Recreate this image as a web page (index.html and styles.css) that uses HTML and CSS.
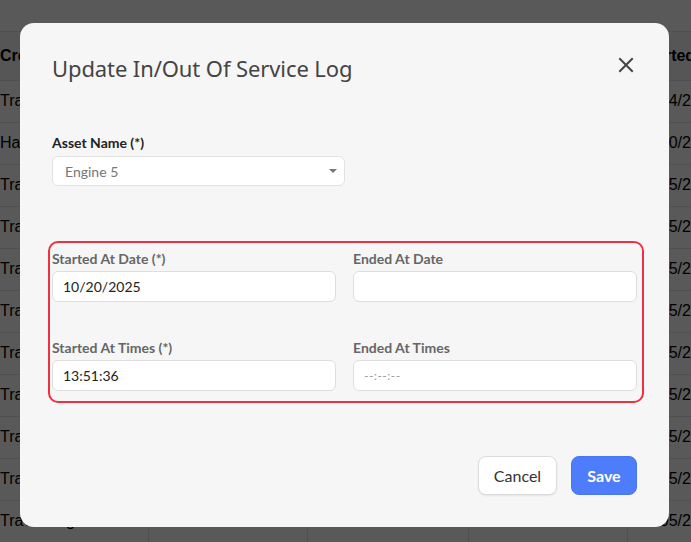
FILE: index.html
```html
<!DOCTYPE html>
<html lang="en">
<head>
<meta charset="utf-8">
<title>Service Log</title>
<link rel="stylesheet" href="styles.css">
</head>
<body>
<div class="page">
  <div class="topbar"></div>
  <table class="log-table">
    <colgroup>
      <col class="col-a"><col class="col-b"><col class="col-c"><col class="col-d"><col>
    </colgroup>
    <thead>
      <tr><th>Created</th><th></th><th></th><th></th><th>Started</th></tr>
    </thead>
    <tbody>
      <tr><td>Travel</td><td></td><td></td><td></td><td>10/14/2025</td></tr>
      <tr><td>Hangar</td><td></td><td></td><td></td><td>10/10/2025</td></tr>
      <tr><td>Travel</td><td></td><td></td><td></td><td>10/05/2025</td></tr>
      <tr><td>Travel</td><td></td><td></td><td></td><td>10/05/2025</td></tr>
      <tr><td>Travel</td><td></td><td></td><td></td><td>10/05/2025</td></tr>
      <tr><td>Travel</td><td></td><td></td><td></td><td>10/05/2025</td></tr>
      <tr><td>Travel</td><td></td><td></td><td></td><td>10/05/2025</td></tr>
      <tr><td>Travel</td><td></td><td></td><td></td><td>10/05/2025</td></tr>
      <tr><td>Travel</td><td></td><td></td><td></td><td>10/05/2025</td></tr>
      <tr><td>Travel</td><td></td><td></td><td></td><td>10/05/2025</td></tr>
      <tr><td>Travel Log</td><td></td><td></td><td></td><td>10/05/2025</td></tr>
    </tbody>
  </table>
</div>

<div class="overlay">
  <div class="modal" role="dialog" aria-labelledby="modal-title">
    <div class="modal-header">
      <h2 id="modal-title" class="modal-title">Update In/Out Of Service Log</h2>
      <button class="close-btn" aria-label="Close">
        <svg width="16" height="16" viewBox="0 0 16 16"><path d="M2 2 L14 14 M14 2 L2 14" stroke="#454545" stroke-width="2" stroke-linecap="square"/></svg>
      </button>
    </div>

    <div class="field asset-field">
      <label class="label-strong">Asset Name (*)</label>
      <div class="select">
        <span class="select-value">Engine 5</span>
        <span class="caret"></span>
      </div>
    </div>

    <div class="time-box">
      <div class="field">
        <label class="label-muted">Started At Date (*)</label>
        <div class="input">10/20/2025</div>
      </div>
      <div class="field">
        <label class="label-muted">Ended At Date</label>
        <div class="input"></div>
      </div>
      <div class="field">
        <label class="label-muted">Started At Times (*)</label>
        <div class="input">13:51:36</div>
      </div>
      <div class="field">
        <label class="label-muted">Ended At Times</label>
        <div class="input placeholder">--:--:--</div>
      </div>
    </div>

    <div class="modal-footer">
      <button class="btn btn-cancel">Cancel</button>
      <button class="btn btn-save">Save</button>
    </div>
  </div>
</div>
</body>
</html>
```

FILE: styles.css
```css
* { box-sizing: border-box; }

html, body {
  margin: 0;
  padding: 0;
  width: 691px;
  height: 542px;
  overflow: hidden;
}

body {
  font-family: Lato, "Liberation Sans", sans-serif;
  background: #ffffff;
  position: relative;
}

/* page behind the dialog */
.page {
  width: 691px;
}

.topbar {
  height: 32px;
  background: #ffffff;
  border-bottom: 1px solid #e6e6e6;
}

.log-table {
  width: 691px;
  table-layout: fixed;
  border-collapse: collapse;
  font-family: "Liberation Sans", Arial, sans-serif;
  font-size: 16px;
  color: #000;
}

.col-a { width: 148px; }
.col-b { width: 159px; }
.col-c { width: 161px; }
.col-d { width: 159px; }

.log-table th,
.log-table td {
  padding: 0;
  white-space: nowrap;
  overflow: hidden;
  text-align: left;
}

.log-table th {
  height: 48px;
  font-weight: 700;
  background: #f7f7f7;
  border-bottom: 1px solid #e4e4e4;
}

.log-table td {
  height: 42px;
  border-bottom: 1px solid #e4e4e4;
  border-left: 1px solid #e4e4e4;
  background: #ffffff;
}

.log-table td:first-child { border-left: none; }

.log-table th:last-child { padding-left: 13px; }
.log-table td:last-child { padding-left: 10px; }

/* dimmed backdrop */
.overlay {
  position: absolute;
  inset: 0;
  background: rgba(0, 0, 0, 0.65);
}

.modal {
  position: absolute;
  left: 20px;
  top: 23px;
  width: 649px;
  height: 504px;
  background: #f6f6f6;
  border-radius: 14px;
  padding: 27px 32px 0 32px;
}

.modal-header {
  display: flex;
  align-items: center;
  justify-content: space-between;
  height: 36px;
}

.modal-title {
  margin: 0;
  font-family: "Noto Sans", "Open Sans", sans-serif;
  font-weight: 400;
  font-size: 22px;
  color: #444;
  letter-spacing: -0.1px;
}

.close-btn {
  border: none;
  background: none;
  padding: 0;
  width: 16px;
  height: 16px;
  margin: 0 3px 6px 0;
  display: flex;
}

.field {
  display: flex;
  flex-direction: column;
}

.asset-field {
  margin-top: 48px;
  width: 293px;
}

.label-strong {
  font-weight: 700;
  font-size: 14px;
  color: #222;
  line-height: 17px;
  margin-bottom: 5px;
}

.select {
  height: 30px;
  background: #fff;
  border: 1px solid #e2e2e2;
  border-radius: 6px;
  display: flex;
  align-items: center;
  justify-content: space-between;
  padding: 0 7px 0 12px;
}

.select-value {
  font-size: 14px;
  color: #777;
}

.caret {
  width: 0;
  height: 0;
  border-left: 4px solid transparent;
  border-right: 4px solid transparent;
  border-top: 4px solid #777;
}

.time-box {
  margin: 55px -7px 0 -4px;
  border: 2px solid #ee3042;
  border-radius: 10px;
  padding: 7px 5px 10px 2px;
  display: grid;
  grid-template-columns: 1fr 1fr;
  column-gap: 17px;
  row-gap: 37px;
}

.label-muted {
  font-weight: 700;
  font-size: 14px;
  color: #666;
  line-height: 17px;
  margin-bottom: 4px;
}

.input {
  height: 31px;
  background: #fff;
  border: 1px solid #dedede;
  border-radius: 6px;
  padding: 0 10px;
  display: flex;
  align-items: center;
  font-size: 14px;
  color: #222;
}

.input.placeholder {
  font-size: 12px;
  color: #999;
  letter-spacing: 0.5px;
}

.modal-footer {
  display: flex;
  justify-content: flex-end;
  gap: 14px;
  margin-top: 53px;
}

.btn {
  height: 39px;
  border-radius: 8px;
  font-family: Lato, "Liberation Sans", sans-serif;
  font-size: 16px;
  padding: 0;
  cursor: pointer;
}

.btn-cancel {
  width: 79px;
  background: #fff;
  border: 1px solid #dcdcdc;
  color: #333;
  box-shadow: 0 1px 2px rgba(0,0,0,0.08);
}

.btn-save {
  width: 66px;
  background: #4e7dfc;
  border: 1px solid #4a76ef;
  color: #fff;
  font-weight: 700;
}
```
